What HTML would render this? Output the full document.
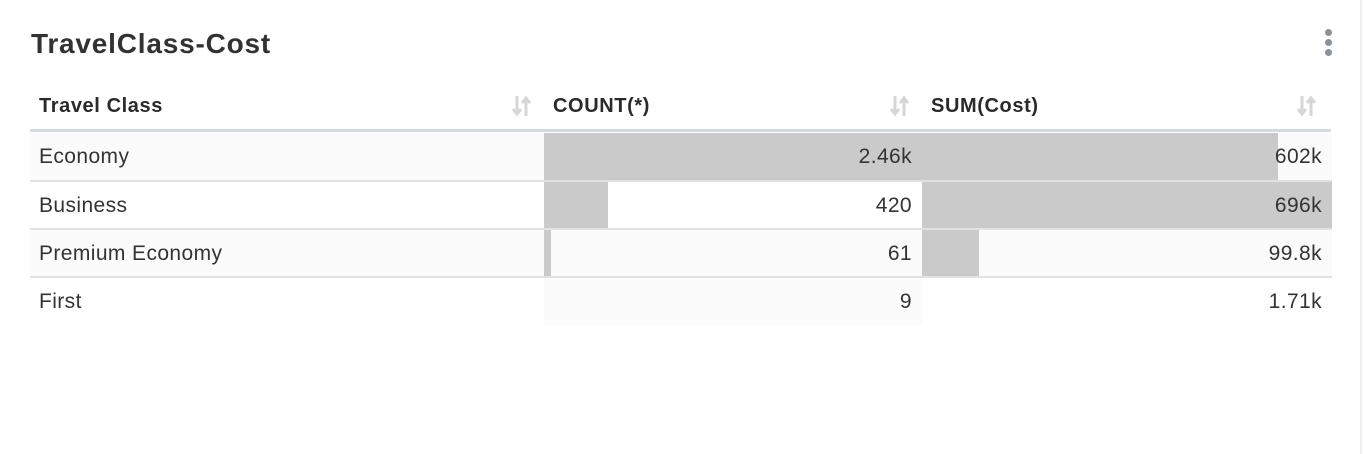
<!DOCTYPE html>
<html><head><meta charset="utf-8"><style>
body{margin:0;width:1364px;height:454px;background:#fff;font-family:"Liberation Sans",sans-serif;color:#333;position:relative;overflow:hidden}
.title{position:absolute;left:31px;top:28px;font-size:28px;font-weight:bold;color:#323232;letter-spacing:0.8px}
.dots{position:absolute;left:1325px;top:29px}
.dots i{display:block;width:7px;height:7px;border-radius:50%;background:#8a9197;margin-bottom:3px}
.rb{position:absolute;left:1360px;top:0;width:2px;height:454px;background:#f0f0f0}
.h{position:absolute;top:95px;font-size:20px;font-weight:bold;color:#2a2a2a;letter-spacing:0.6px}
.hl{position:absolute;left:30px;top:129px;width:1301px;height:3px;background:#d5dadd}
.row{position:absolute;left:30px;width:1302px;height:47px;font-size:21px;letter-spacing:0.4px}
.sep{position:absolute;left:30px;width:1302px;height:2px;background:#e0e3e5}
.c{position:absolute;top:0;height:47px;line-height:47px}
.bar{position:absolute;top:0;height:47px;background:#cacaca}
.sort{position:absolute;top:94px}
</style></head><body>
<div class="title">TravelClass-Cost</div>
<div class="dots"><i></i><i></i><i></i></div>
<div class="rb"></div>
<div class="h" style="left:39px">Travel Class</div>
<div class="h" style="left:553px">COUNT(*)</div>
<div class="h" style="left:931px">SUM(Cost)</div>
<svg class="sort" style="left:511px" width="22" height="24" viewBox="0 0 22 24"><path d="M6 2v18M2 15l4 5 4-5" stroke="#d6d6d6" stroke-width="3" fill="none"/><path d="M15 22V4M11 9l4-5 4 5" stroke="#d6d6d6" stroke-width="3" fill="none"/></svg>
<svg class="sort" style="left:889px" width="22" height="24" viewBox="0 0 22 24"><path d="M6 2v18M2 15l4 5 4-5" stroke="#d6d6d6" stroke-width="3" fill="none"/><path d="M15 22V4M11 9l4-5 4 5" stroke="#d6d6d6" stroke-width="3" fill="none"/></svg>
<svg class="sort" style="left:1296px" width="22" height="24" viewBox="0 0 22 24"><path d="M6 2v18M2 15l4 5 4-5" stroke="#d6d6d6" stroke-width="3" fill="none"/><path d="M15 22V4M11 9l4-5 4 5" stroke="#d6d6d6" stroke-width="3" fill="none"/></svg>
<div class="hl"></div>

<div class="row" style="top:133px;background:#fbfbfb">
<div class="bar" style="left:514px;width:378px"></div>
<div class="bar" style="left:892px;width:356px"></div>
<div class="c" style="left:9px">Economy</div>
<div class="c" style="right:420px">2.46k</div>
<div class="c" style="right:10px">602k</div>
</div>
<div class="sep" style="top:180px"></div>
<div class="row" style="top:182px">
<div class="bar" style="left:514px;width:64px"></div>
<div class="bar" style="left:892px;width:410px"></div>
<div class="c" style="left:9px">Business</div>
<div class="c" style="right:420px">420</div>
<div class="c" style="right:10px">696k</div>
</div>
<div class="sep" style="top:228px"></div>
<div class="row" style="top:230px;background:#fbfbfb">
<div class="bar" style="left:514px;width:7px"></div>
<div class="bar" style="left:892px;width:57px"></div>
<div class="c" style="left:9px">Premium Economy</div>
<div class="c" style="right:420px">61</div>
<div class="c" style="right:10px">99.8k</div>
</div>
<div class="sep" style="top:276px"></div>
<div class="row" style="top:278px">
<div class="bar" style="left:514px;width:378px;background:#fbfbfb"></div>
<div class="c" style="left:9px">First</div>
<div class="c" style="right:420px">9</div>
<div class="c" style="right:10px">1.71k</div>
</div>
</body></html>
